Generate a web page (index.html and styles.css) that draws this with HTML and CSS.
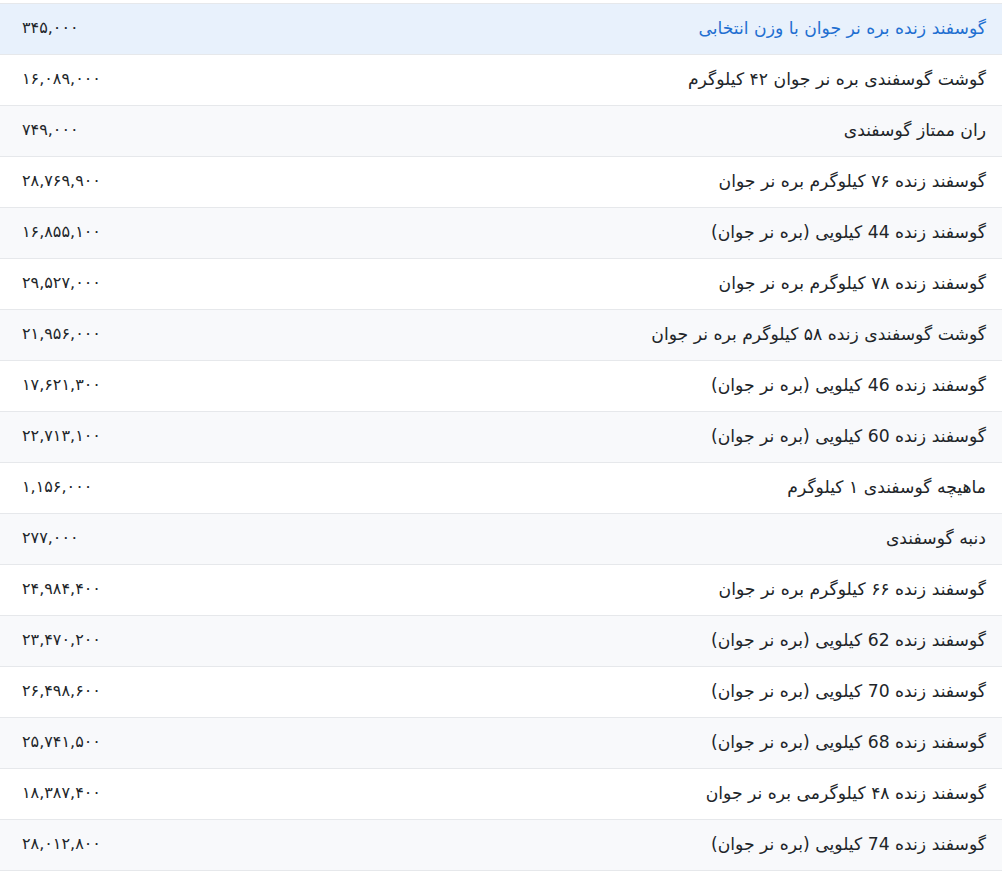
FILE: index.html
```html
<!DOCTYPE html>
<html lang="fa" dir="rtl">
<head>
<meta charset="utf-8">
<link rel="stylesheet" href="styles.css">
</head>
<body>
<table class="prices">
<tbody>
<tr class="active"><td class="name">گوسفند زنده بره نر جوان با وزن انتخابی</td><td class="price">۳۴۵,۰۰۰</td></tr>
<tr><td class="name">گوشت گوسفندی بره نر جوان ۴۲ کیلوگرم</td><td class="price">۱۶,۰۸۹,۰۰۰</td></tr>
<tr><td class="name">ران ممتاز گوسفندی</td><td class="price">۷۴۹,۰۰۰</td></tr>
<tr><td class="name">گوسفند زنده ۷۶ کیلوگرم بره نر جوان</td><td class="price">۲۸,۷۶۹,۹۰۰</td></tr>
<tr><td class="name">گوسفند زنده 44 کیلویی (بره نر جوان)</td><td class="price">۱۶,۸۵۵,۱۰۰</td></tr>
<tr><td class="name">گوسفند زنده ۷۸ کیلوگرم بره نر جوان</td><td class="price">۲۹,۵۲۷,۰۰۰</td></tr>
<tr><td class="name">گوشت گوسفندی زنده ۵۸ کیلوگرم بره نر جوان</td><td class="price">۲۱,۹۵۶,۰۰۰</td></tr>
<tr><td class="name">گوسفند زنده 46 کیلویی (بره نر جوان)</td><td class="price">۱۷,۶۲۱,۳۰۰</td></tr>
<tr><td class="name">گوسفند زنده 60 کیلویی (بره نر جوان)</td><td class="price">۲۲,۷۱۳,۱۰۰</td></tr>
<tr><td class="name">ماهیچه گوسفندی ۱ کیلوگرم</td><td class="price">۱,۱۵۶,۰۰۰</td></tr>
<tr><td class="name">دنبه گوسفندی</td><td class="price">۲۷۷,۰۰۰</td></tr>
<tr><td class="name">گوسفند زنده ۶۶ کیلوگرم بره نر جوان</td><td class="price">۲۴,۹۸۴,۴۰۰</td></tr>
<tr><td class="name">گوسفند زنده 62 کیلویی (بره نر جوان)</td><td class="price">۲۳,۴۷۰,۲۰۰</td></tr>
<tr><td class="name">گوسفند زنده 70 کیلویی (بره نر جوان)</td><td class="price">۲۶,۴۹۸,۶۰۰</td></tr>
<tr><td class="name">گوسفند زنده 68 کیلویی (بره نر جوان)</td><td class="price">۲۵,۷۴۱,۵۰۰</td></tr>
<tr><td class="name">گوسفند زنده ۴۸ کیلوگرمی بره نر جوان</td><td class="price">۱۸,۳۸۷,۴۰۰</td></tr>
<tr><td class="name">گوسفند زنده 74 کیلویی (بره نر جوان)</td><td class="price">۲۸,۰۱۲,۸۰۰</td></tr>
</tbody>
</table>
</body>
</html>
```
FILE: styles.css
```css
html, body {
  margin: 0;
  padding: 0;
  background: #ffffff;
}
body {
  padding-top: 3px;
  font-family: "DejaVu Sans", sans-serif;
  font-size: 16px;
  color: #212529;
}
.prices {
  width: 100%;
  border-collapse: collapse;
  border-top: 1px solid #e6e8eb;
}
.prices tr {
  height: 51px;
  border-bottom: 1px solid #e6e8eb;
}
.prices tr:nth-child(odd) {
  background: #f8f9fb;
}
.prices tr.active {
  background: #e8f1fc;
}
.prices tr.active .name {
  color: #1f6fd1;
}
.prices td {
  padding: 0;
  vertical-align: middle;
  line-height: 20px;
}
.name {
  text-align: right;
  font-size: 17.2px;
  padding-right: 16px !important;
  padding-bottom: 2px !important;
}
.price {
  text-align: left;
  padding-left: 22px !important;
  padding-bottom: 2px !important;
  white-space: nowrap;
}
```
